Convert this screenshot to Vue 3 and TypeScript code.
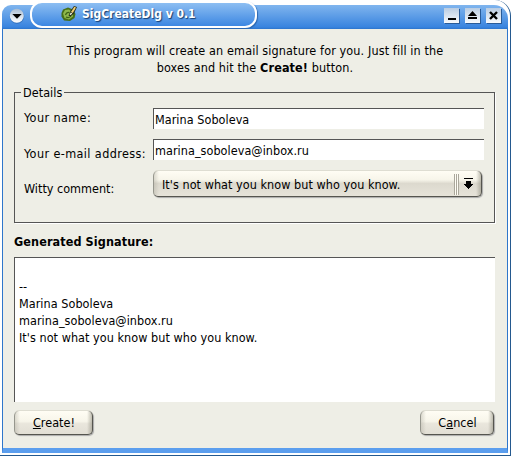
<script setup lang="ts">
import { computed, ref } from 'vue'

const name = ref('Marina Soboleva')
const email = ref('marina_soboleva@inbox.ru')
const comment = ref("It's not what you know but who you know.")
const signature = computed(() => ['', '--', name.value, email.value, comment.value])
</script>

<template>
  <main class="window">
    <header class="titlebar">
      <button class="menu" aria-label="Window menu">
        <svg width="16" height="16" viewBox="0 0 16 16">
          <defs>
            <linearGradient id="orb" x1="0" y1="0" x2="0" y2="1">
              <stop offset="0" stop-color="#a9bdd4" />
              <stop offset="1" stop-color="#fff" />
            </linearGradient>
          </defs>
          <circle cx="8" cy="8.6" r="7.3" fill="#2b65ad" opacity=".6" />
          <circle cx="7.8" cy="7.8" r="7" fill="url(#orb)" />
          <path d="M3.3 6h9.4L8 10.7z" fill="#000" />
        </svg>
      </button>
      <div class="tab">
        <svg class="logo" width="17" height="17" viewBox="0 0 17 17">
          <path d="M.5 8 2 4.500l5-2 5 2 2.500 4.500-1 4-4.500 3-6-.5-2.500-4z" fill="#476f18" />
          <path d="M2 8.500 4 5l4-.5 3.500 3 .5 4-4 3-4.500-1.500z" fill="#8fb84b" />
          <path d="M4.500 10q1-3 4-2.500M5 12q3 1.500 5-1" fill="none" stroke="#3f6415" stroke-width="1.200" />
          <path d="m7.500 10.500 2-4.500L13 1l3 1-3 6.500-3.500 3z" fill="#26301a" />
          <path d="m10 7 3.400-5.200 1.600.7-3.200 5.400z" fill="#f2cf76" />
          <path d="m8.600 9.700 1.200-2.200 1.500.9-1.600 1.600z" fill="#f2f4e6" />
        </svg>
        <span class="title">SigCreateDlg v 0.1</span>
      </div>
      <div class="controls">
        <button aria-label="Minimize"><svg width="15" height="15"><path d="M4 10h8v2H4z" /></svg></button>
        <button aria-label="Maximize"><svg width="15" height="15"><path d="M7.5 3 12 8H3zM3 9h9v2H3z" /></svg></button>
        <button aria-label="Close"><svg width="15" height="15"><path d="m4 4 7 7m0-7-7 7" stroke="#000" stroke-width="2.4" /></svg></button>
      </div>
    </header>

    <section class="content">
      <p class="intro">
        <span>This program will create an email signature for you. Just fill in the</span>
        <span>boxes and hit the <b>Create!</b> button.</span>
      </p>

      <div class="details" role="group" aria-labelledby="legend">
        <span id="legend" class="legend">Details</span>
        <div class="row">
          <label class="lab" for="name">Your name:</label>
          <input id="name" v-model="name" class="field" type="text" />
        </div>
        <div class="row">
          <label class="lab mail" for="mail">Your e-mail address:</label>
          <input id="mail" v-model="email" class="field" type="text" />
        </div>
        <div class="row">
          <span class="lab witty">Witty comment:</span>
          <button class="combo raised">
            <span>{{ comment }}</span>
            <span class="grip"></span>
            <svg width="10" height="12" viewBox="0 0 10 12" shape-rendering="crispEdges">
              <path d="M0 0h9v1H0zM2 3h5v3h2v1H8v1H7v1H6v1H5v1H4v-1H3V9H2V8H1V7H0V6h2z" />
            </svg>
          </button>
        </div>
      </div>

      <h2>Generated Signature:</h2>
      <div class="output">
        <div v-for="(line, i) in signature" :key="i" class="line">{{ line }}</div>
      </div>

      <footer>
        <button class="push raised"><u>C</u>reate!</button>
        <button class="push cancel raised">C<u>a</u>ncel</button>
      </footer>
    </section>
  </main>
</template>

<style>
body {
  background: #fff;
  overflow: hidden;
}
</style>

<style scoped>
* {
  box-sizing: border-box;
}
.window {
  width: 511px;
  height: 456px;
  padding: 5px 2px 1px;
  border-right: 1px solid #24598f;
  border-bottom: 1px solid #24598f;
  border-radius: 0 16px 0 0;
  background: #fff;
  color: #000;
  font: 12.5px/17px "DejaVu Sans Condensed", "DejaVu Sans", sans-serif;
  font-stretch: condensed;
  letter-spacing: 0.05px;
  display: flex;
  flex-direction: column;
  white-space: nowrap;
}
button {
  border: 0;
  padding: 0;
  margin: 0;
  font: inherit;
  letter-spacing: inherit;
  color: inherit;
}
.titlebar {
  width: 506px;
  height: 24px;
  flex: none;
  display: flex;
  align-items: flex-start;
  border-radius: 9px 14px 0 0;
  background: linear-gradient(#80b5ee, #3984df 92%, #2c74cc);
}
.menu {
  width: 16px;
  height: 16px;
  margin: 3px 0 0 7px;
  background: none;
}
.menu svg,
.controls svg {
  display: block;
}
.tab {
  width: 227px;
  height: 27px;
  margin: -4px 0 0 5px;
  padding: 0 0 0 29px;
  border: 2px solid #fff;
  border-radius: 12px;
  background: linear-gradient(#8dbef2, #3c87e2);
  box-shadow: 1px 1px 1px #2b66ad;
  display: flex;
  align-items: center;
}
.logo {
  flex: none;
  margin-top: -3px;
}
.title {
  margin: -1px 0 0 4px;
  color: #fff;
  font-size: 12px;
  font-weight: bold;
  letter-spacing: 0;
  text-shadow: 1px 1px 1px #173e70;
}
.controls {
  display: flex;
  gap: 6px;
  margin: 3px 7px 0 auto;
}
.controls button {
  width: 15px;
  height: 15px;
  background: linear-gradient(#b9cce2, #f8fafc);
  box-shadow: 1px 1px 0 #285b99;
}
.content {
  width: 506px;
  height: 424px;
  flex: none;
  display: flex;
  flex-direction: column;
  padding: 13px 12px 0 11px;
  border: solid #2e76cb;
  border-width: 0 1px 5px;
  border-bottom-color: #5b9eee;
  background: #eeeee6;
}
.intro {
  margin: 0 0 0 1px;
  height: 43px;
  text-align: center;
}
.intro span {
  display: block;
  letter-spacing: 0.12px;
}
.details {
  position: relative;
  width: 481px;
  height: 138px;
  padding-left: 10px;
  display: flex;
  flex-direction: column;
  align-items: flex-start;
  gap: 11px;
}
.details::before {
  content: "";
  position: absolute;
  inset: 7px 0 0;
  border: 1px solid #555;
  box-shadow: 1px 1px #fff;
}
.legend {
  position: relative;
  height: 17px;
  margin-left: -3px;
  padding: 0 2px;
  line-height: 15px;
  background: #eeeee6;
}
.row {
  position: relative;
  display: flex;
  height: 20px;
}
.row:first-of-type {
  margin-top: -5px;
}
.lab {
  width: 129px;
  flex: none;
  padding-top: 1px;
  letter-spacing: 0.4px;
}
.lab.mail {
  padding-top: 6px;
}
.lab.witty {
  padding-top: 10px;
  letter-spacing: 0;
}
.field {
  width: 331px;
  height: 21px;
  padding: 1px 1px 1px;
  border: 0;
  border-top: 1px solid #555;
  border-left: 1px solid #555;
  border-radius: 0;
  background: #fff;
  font: inherit;
  letter-spacing: inherit;
  color: inherit;
  outline: 0;
}
.raised {
  border-radius: 5px;
  border: solid #55554f;
  border-width: 0 1px 1px;
  border-left-color: #96968d;
  background: linear-gradient(90deg, #aaa89c66, transparent 5px calc(100% - 5px), #8a887a88), linear-gradient(#fffdf4, #f7f5ea 35%, #dcd9ce 50%, #e6e3d9);
  box-shadow: 1px 1px 1px #aaa, 0 -1px #deddd2;
}
.combo {
  width: 329px;
  height: 26px;
  padding: 1px 7px 0 8px;
  margin-top: 1px;
  display: flex;
  align-items: center;
}
.grip {
  width: 5px;
  height: 21px;
  margin: 0 5px 0 auto;
  background: repeating-linear-gradient(90deg, #aaa79b 0 1px, #fffdf5 1px 2px);
}
h2 {
  margin: 10px 0 0;
  height: 24px;
  font-size: 12.5px;
  line-height: 17px;
  letter-spacing: 0.1px;
}
.output {
  width: 481px;
  height: 145px;
  padding: 3px 4px 0;
  border-top: 1px solid #555;
  border-left: 1px solid #555;
  background: #fff;
}
.line {
  height: 17px;
}
footer {
  display: flex;
  justify-content: space-between;
  width: 480px;
  margin-top: 9px;
}
.push {
  width: 79px;
  height: 24px;
  padding: 0 0 1px 1px;
}
.push.cancel {
  width: 74px;
}
.push.raised {
  background: linear-gradient(90deg, #aaa89c66, transparent 5px calc(100% - 5px), #8a887a88), linear-gradient(#fffdf4, #f7f5ea 45%, #e9e6dc 55%, #e2dfd5);
}
</style>
